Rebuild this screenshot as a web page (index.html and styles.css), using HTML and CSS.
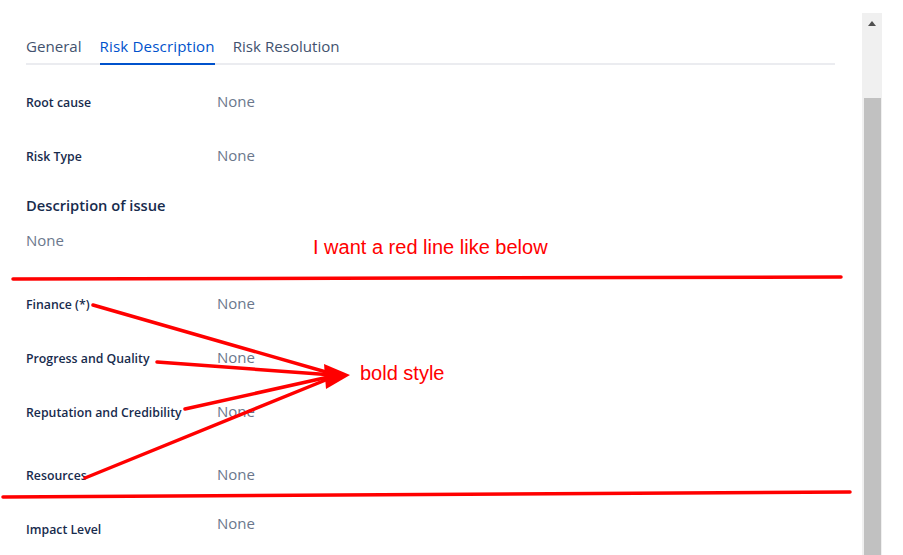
FILE: index.html
```html
<!DOCTYPE html>
<html>
<head>
<meta charset="utf-8">
<link rel="stylesheet" href="styles.css">
</head>
<body>
<div class="page">
  <div class="main">
    <div class="tabs">
      <div class="tab">General</div>
      <div class="tab active">Risk Description</div>
      <div class="tab">Risk Resolution</div>
    </div>
    <div class="row r1"><div class="label">Root cause</div><div class="value">None</div></div>
    <div class="row"><div class="label">Risk Type</div><div class="value">None</div></div>
    <div class="heading">Description of issue</div>
    <div class="plain">None</div>
    <div class="row r-fin"><div class="label">Finance (*)</div><div class="value">None</div></div>
    <div class="row"><div class="label">Progress and Quality</div><div class="value">None</div></div>
    <div class="row"><div class="label">Reputation and Credibility</div><div class="value">None</div></div>
    <div class="row r-res"><div class="label">Resources</div><div class="value">None</div></div>
    <div class="row"><div class="label">Impact Level</div><div class="value up">None</div></div>
  </div>
  <div class="scrollbar">
    <div class="arrow"></div>
    <div class="thumb"></div>
  </div>
</div>
<svg class="overlay" width="903" height="555" viewBox="0 0 903 555">
  <g stroke="#ff0000" stroke-width="3.5" stroke-linecap="round" fill="none">
    <line x1="13" y1="279" x2="841" y2="277"/>
    <line x1="3" y1="497" x2="850" y2="492"/>
    <line x1="93" y1="305" x2="333" y2="374"/>
    <line x1="157" y1="362" x2="333" y2="375"/>
    <line x1="185" y1="409" x2="333" y2="376"/>
    <line x1="85" y1="478" x2="333" y2="377"/>
  </g>
  <polygon points="324,364 350,375 326,389" fill="#ff0000"/>
  <text x="313" y="254" class="note">I want a red line like below</text>
  <text x="360" y="380" class="note">bold style</text>
</svg>
</body>
</html>
```
FILE: styles.css
```css
html, body {
  margin: 0;
  padding: 0;
  background: #fff;
}
body {
  width: 903px;
  height: 555px;
  overflow: hidden;
  position: relative;
  font-family: "Open Sans", "Noto Sans", sans-serif;
}
.page {
  display: flex;
  height: 555px;
}
.main {
  width: 809px;
  padding-left: 26px;
  flex: none;
}
.tabs {
  display: flex;
  gap: 18px;
  padding-top: 36px;
  border-bottom: 2px solid #ebecf0;
}
.tab {
  font-size: 15.1px;
  line-height: 20px;
  color: #42526e;
  padding-bottom: 7px;
  border-bottom: 2px solid transparent;
  margin-bottom: -2px;
}
.tab.active {
  color: #0052cc;
  border-bottom-color: #0052cc;
  letter-spacing: 0.15px;
}
.row {
  display: flex;
  align-items: center;
  height: 54px;
}
.r1 { margin-top: 10px; }
.r-fin { margin-top: 27px; }
.r-res { margin-top: 9px; }
.label {
  width: 191px;
  font-size: 12.3px;
  font-weight: 600;
  color: #172b4d;
  white-space: nowrap;
}
.value {
  font-size: 15px;
  color: #6b778c;
  padding-bottom: 2px;
}
.value.up { padding-bottom: 12px; }
.heading {
  margin-top: 12px;
  font-size: 14.7px;
  line-height: 20px;
  font-weight: 600;
  color: #172b4d;
}
.plain {
  margin-top: 15px;
  font-size: 15px;
  line-height: 20px;
  color: #6b778c;
}
.scrollbar {
  margin-left: 27px;
  margin-top: 13px;
  width: 20px;
  background: #f0f0f0;
  display: flex;
  flex-direction: column;
  align-items: center;
}
.arrow {
  margin-top: 8px;
  width: 0;
  height: 0;
  border-left: 4px solid transparent;
  border-right: 4px solid transparent;
  border-bottom: 5px solid #505050;
}
.thumb {
  margin-top: 72px;
  width: 17px;
  flex: 1;
  background: #c1c1c1;
}
.overlay {
  position: absolute;
  left: 0;
  top: 0;
  pointer-events: none;
}
.note {
  font-family: "Liberation Sans", Arial, sans-serif;
  font-size: 20px;
  fill: #ff0000;
}
```
